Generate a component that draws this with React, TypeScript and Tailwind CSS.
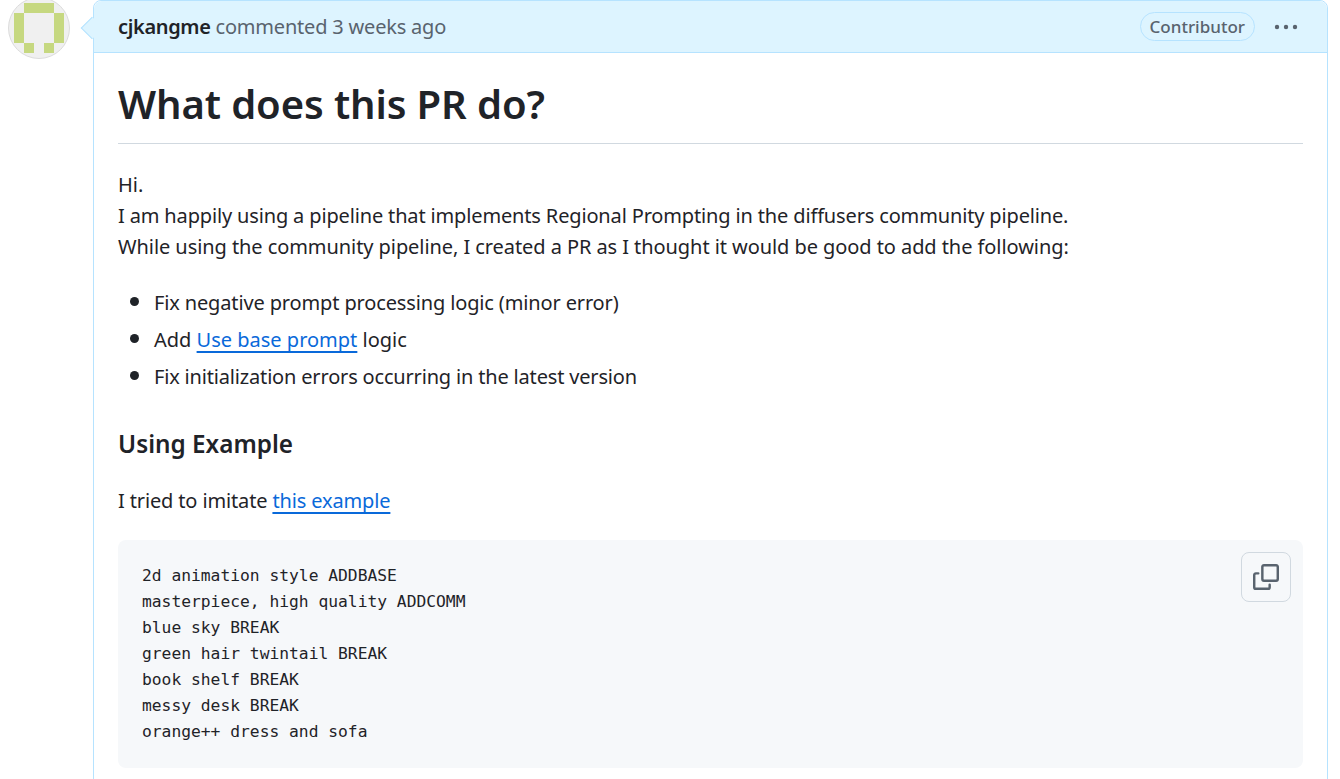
import React from 'react';

const sans = { fontFamily: '"Noto Sans", sans-serif' };

const Identicon: React.FC = () => (
  <svg width="62" height="62" viewBox="1 1 60 60" className="rounded-full border border-[#dcdcdc] bg-[#f0f0f0] shrink-0 -mt-[3px]">
    <g fill="#c6d880">
      <rect x="16" y="6" width="30" height="10" />
      <rect x="6" y="16" width="10" height="30" />
      <rect x="46" y="16" width="10" height="30" />
      <rect x="16" y="46" width="10" height="10" />
      <rect x="36" y="46" width="10" height="10" />
    </g>
  </svg>
);

const links = 'text-[#0969da] underline decoration-2 underline-offset-[4px] [text-decoration-skip-ink:none]';

export default function App() {
  return (
    <div style={sans} className="w-[1340px] h-[779px] overflow-hidden bg-white text-[#1f2328] flex items-start pl-2">
      <Identicon />
      <div className="relative ml-[23px] w-[1235px] h-[790px] border border-[#b6e3ff] rounded-t-lg">
        <div className="absolute -left-[10px] top-[19px] w-[16px] h-[16px] rotate-45 bg-[#ddf4ff] border-b border-l border-[#b6e3ff]" />
        <div className="relative h-[52px] bg-[#ddf4ff] border-b border-[#b6e3ff] rounded-t-lg flex items-center justify-between pl-6 pr-[28px]">
          <div className="text-[20px] text-[#59636e] tracking-[-0.2px]">
            <span className="font-semibold text-[#1f2328] tracking-[-0.35px]">cjkangme</span> commented 3 weeks ago
          </div>
          <div className="flex items-center gap-[18px]">
            <span className="h-[29px] px-[9px] rounded-full border border-[#b6e3ff] text-[#59636e] text-[17px] font-medium flex items-center">Contributor</span>
            <svg width="26" height="8" viewBox="0 0 26 8" fill="#59636e">
              <circle cx="4" cy="4" r="2.2" />
              <circle cx="13" cy="4" r="2.2" />
              <circle cx="22" cy="4" r="2.2" />
            </svg>
          </div>
        </div>
        <div className="px-6 pt-[21px]">
          <h1 className="text-[40px] leading-[60px] font-semibold tracking-[-0.1px] pb-[9px] border-b border-[#d1d9e0]">What does this PR do?</h1>
          <p className="mt-[25px] text-[20px] leading-[31px]">
            Hi.<br />
            <span className="tracking-[-0.15px]">I am happily using a pipeline that implements Regional Prompting in the diffusers community pipeline.</span><br />
            <span className="tracking-[-0.07px]">While using the community pipeline, I created a PR as I thought it would be good to add the following:</span>
          </p>
          <ul className="mt-[23px] pl-9 list-disc marker:text-[24px] text-[20px] leading-[31px] space-y-[6px]">
            <li className="h-[31px] tracking-[-0.14px]">Fix negative prompt processing logic (minor error)</li>
            <li className="h-[31px]">Add <a className={links}>Use base prompt</a> logic</li>
            <li className="h-[31px] tracking-[-0.175px]">Fix initialization errors occurring in the latest version</li>
          </ul>
          <h3 className="mt-[38px] text-[24.3px] leading-[31px] font-semibold">Using Example</h3>
          <p className="mt-[26px] text-[20px] leading-[31px] tracking-[-0.14px]">
            I tried to imitate <a className={links}>this example</a>
          </p>
          <div className="relative mt-[24px] h-[228px] rounded-lg bg-[#f6f8fa] px-6 pt-[23px]">
            <pre className="text-[#1f2328] text-[16.3px] leading-[26px]" style={{ fontFamily: '"DejaVu Sans Mono", monospace' }}>{`2d animation style ADDBASE
masterpiece, high quality ADDCOMM
blue sky BREAK
green hair twintail BREAK
book shelf BREAK
messy desk BREAK
orange++ dress and sofa`}</pre>
            <button className="absolute right-3 top-3 w-[50px] h-[50px] rounded-lg border border-[#d1d9e0] flex items-center justify-center">
              <svg width="26" height="26" viewBox="0 0 16 16" fill="#59636e">
                <path d="M0 6.75C0 5.784.784 5 1.75 5h1.5a.75.75 0 0 1 0 1.5h-1.5a.25.25 0 0 0-.25.25v7.5c0 .138.112.25.25.25h7.5a.25.25 0 0 0 .25-.25v-1.5a.75.75 0 0 1 1.5 0v1.5A1.75 1.75 0 0 1 9.25 16h-7.5A1.75 1.75 0 0 1 0 14.25Z" />
                <path d="M5 1.75C5 .784 5.784 0 6.75 0h7.5C15.216 0 16 .784 16 1.75v7.5A1.75 1.75 0 0 1 14.25 11h-7.5A1.75 1.75 0 0 1 5 9.25Zm1.75-.25a.25.25 0 0 0-.25.25v7.5c0 .138.112.25.25.25h7.5a.25.25 0 0 0 .25-.25v-7.5a.25.25 0 0 0-.25-.25Z" />
              </svg>
            </button>
          </div>
        </div>
      </div>
    </div>
  );
}
